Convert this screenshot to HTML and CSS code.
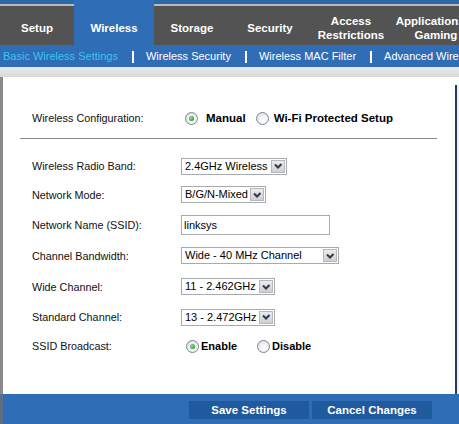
FILE: index.html
```html
<!DOCTYPE html>
<html>
<head>
<meta charset="utf-8">
<link rel="stylesheet" href="styles.css">
</head>
<body>
<div class="page">
  <nav class="tabs">
    <div class="tab t-setup">Setup</div>
    <div class="tab t-wireless active">Wireless</div>
    <div class="tab t-storage">Storage</div>
    <div class="tab t-security">Security</div>
    <div class="tab t-access">Access<br>Restrictions</div>
    <div class="tab t-apps">Applications &amp;<br>Gaming</div>
  </nav>
  <div class="subnav">
    <span class="sub current">Basic Wireless Settings</span>
    <span class="sep"></span>
    <span class="sub">Wireless Security</span>
    <span class="sep"></span>
    <span class="sub">Wireless MAC Filter</span>
    <span class="sep"></span>
    <span class="sub">Advanced Wireless Settings</span>
  </div>
  <div class="band"></div>
  <main class="main">
    <div class="content">
      <div class="config">
        <div class="label">Wireless Configuration:</div>
        <div class="choices">
          <span class="radio checked"></span><span class="opt big">Manual</span>
          <span class="radio r-wps"></span><span class="opt big o-wps">Wi-Fi Protected Setup</span>
        </div>
      </div>
      <div class="rule"></div>
      <div class="form">
        <div class="label">Wireless Radio Band:</div>
        <div class="field"><div class="select w-band"><span class="val">2.4GHz Wireless</span><span class="drop"><svg viewBox="0 0 12 12" width="12" height="12"><path d="M3 4.5 L6 7.5 L9.5 4" fill="none" stroke="#2b3a55" stroke-width="2"/></svg></span></div></div>

        <div class="label">Network Mode:</div>
        <div class="field"><div class="select w-mode"><span class="val">B/G/N-Mixed</span><span class="drop"><svg viewBox="0 0 12 12" width="12" height="12"><path d="M3 4.5 L6 7.5 L9.5 4" fill="none" stroke="#2b3a55" stroke-width="2"/></svg></span></div></div>

        <div class="label">Network Name (SSID):</div>
        <div class="field"><div class="input">linksys</div></div>

        <div class="label">Channel Bandwidth:</div>
        <div class="field"><div class="select w-bw"><span class="val">Wide - 40 MHz Channel</span><span class="drop"><svg viewBox="0 0 12 12" width="12" height="12"><path d="M3 4.5 L6 7.5 L9.5 4" fill="none" stroke="#2b3a55" stroke-width="2"/></svg></span></div></div>

        <div class="label">Wide Channel:</div>
        <div class="field"><div class="select w-ch"><span class="val">11 - 2.462GHz</span><span class="drop"><svg viewBox="0 0 12 12" width="12" height="12"><path d="M3 4.5 L6 7.5 L9.5 4" fill="none" stroke="#2b3a55" stroke-width="2"/></svg></span></div></div>

        <div class="label">Standard Channel:</div>
        <div class="field"><div class="select w-ch"><span class="val">13 - 2.472GHz</span><span class="drop"><svg viewBox="0 0 12 12" width="12" height="12"><path d="M3 4.5 L6 7.5 L9.5 4" fill="none" stroke="#2b3a55" stroke-width="2"/></svg></span></div></div>

        <div class="label">SSID Broadcast:</div>
        <div class="field choices ssid">
          <span class="radio checked"></span><span class="opt o-en">Enable</span>
          <span class="radio r-dis"></span><span class="opt o-dis">Disable</span>
        </div>
      </div>
    </div>
    <div class="rail"></div>
  </main>
  <footer class="footer">
    <button class="btn">Save Settings</button>
    <button class="btn">Cancel Changes</button>
  </footer>
</div>
</body>
</html>
```

FILE: styles.css
```css
* { box-sizing: border-box; }
html, body { margin: 0; padding: 0; background: #ffffff; }
body { font-family: "Liberation Sans", Arial, sans-serif; color: #000; }

.page {
  width: 459px;
  height: 424px;
  overflow: hidden;
  display: flex;
  flex-direction: column;
}

/* Top tabs */
.tabs {
  height: 45px;
  display: flex;
  overflow: hidden;
  flex-shrink: 0;
  background: linear-gradient(to bottom, #2d68ad 0, #2d68ad 4px, #b9b9b9 4px, #b9b9b9 6px, #535353 6px);
}
.tab {
  flex-shrink: 0;
  display: flex;
  align-items: center;
  justify-content: center;
  text-align: center;
  padding-top: 10px;
  color: #ffffff;
  font-weight: bold;
  font-size: 11.5px;
  line-height: 14px;
  white-space: nowrap;
}
.tab.active { background: #2f6db6; }
.t-setup { width: 74px; }
.t-wireless { width: 80px; }
.t-storage { width: 76px; }
.t-security { width: 80px; }
.t-access { width: 82px; }
.t-apps { width: 88px; }

/* Sub navigation */
.subnav {
  height: 22px;
  flex-shrink: 0;
  background: #2f6db6;
  display: flex;
  align-items: center;
  padding-left: 3px;
  white-space: nowrap;
  overflow: hidden;
  font-size: 11px;
}
.sub { color: #ffffff; flex-shrink: 0; }
.sub.current { color: #3cc3ef; }
.sep {
  flex-shrink: 0;
  width: 2px;
  height: 12px;
  background: #ffffff;
  margin: 1px 12px 0 14px;
}

.band {
  height: 10px;
  flex-shrink: 0;
  background: linear-gradient(to bottom, #e9e9e9, #d9d9d9);
}

/* Main area */
.main {
  flex: 1;
  display: flex;
  border-left: 3px solid #8a8a8a;
  background: #ffffff;
}
.content {
  flex: 1;
  padding: 27px 18px 0 17px;
}
.rail {
  width: 4px;
  margin-top: 8px;
  border-left: 2px solid #23395f;
  background: #f2f2f2;
}

.config {
  height: 28px;
  display: grid;
  grid-template-columns: 149px 1fr;
  align-items: center;
  padding-left: 12px;
}
.label {
  font-size: 10.8px;
  color: #111;
}
.choices {
  display: flex;
  align-items: center;
}
.radio {
  width: 13px;
  height: 13px;
  border-radius: 50%;
  border: 1px solid #7a8796;
  background: radial-gradient(circle at 60% 65%, #ffffff 0, #f1f1f1 45%, #d0d4d8 100%);
  margin-left: 4px;
  position: relative;
  flex-shrink: 0;
}
.radio.checked::after {
  content: "";
  position: absolute;
  left: 3px;
  top: 3px;
  width: 5px;
  height: 5px;
  border-radius: 50%;
  background: radial-gradient(circle at 40% 40%, #9be39b 0, #3aa83a 60%, #217d21 100%);
}
.opt {
  font-weight: bold;
  font-size: 11px;
  margin-left: 4px;
}
.opt.big { font-size: 11.5px; margin-left: 8px; }
.r-wps { margin-left: 10px; }
.opt.o-wps { margin-left: 5px; }

.rule {
  margin-top: 6px;
  height: 1px;
  background: #8a8a8a;
}

.form {
  margin-top: 13px;
  padding-left: 12px;
  display: grid;
  grid-template-columns: 149px 1fr;
  grid-template-rows: 28px 29px 31px 31px 31px 30px 28px;
  align-items: center;
}
.field { display: flex; align-items: center; }

.select {
  height: 17px;
  border: 1px solid #a7abb0;
  background: #ffffff;
  display: flex;
  align-items: stretch;
  font-size: 11px;
}
.select .val {
  flex: 1;
  padding-left: 3px;
  line-height: 15px;
  white-space: nowrap;
  overflow: hidden;
}
.drop {
  width: 14px;
  margin: 1px;
  border: 1px solid #b7b7b7;
  background: linear-gradient(to bottom, #ececec, #cfcfcf);
  display: flex;
  align-items: center;
  justify-content: center;
}
.drop svg { display: block; }
.w-band { width: 106px; }
.w-mode { width: 85px; }
.w-bw { width: 158px; }
.w-ch { width: 94px; }

.input {
  width: 149px;
  height: 20px;
  border: 1px solid #a7abb0;
  font-size: 11px;
  line-height: 18px;
  padding-left: 2px;
}

.ssid .radio { margin-left: 5px; }
.ssid .o-en { margin-left: 2px; }
.ssid .r-dis { margin-left: 20px; }
.ssid .o-dis { margin-left: 2px; }

/* Footer */
.footer {
  height: 30px;
  flex-shrink: 0;
  background: #2f6db6;
  border-left: 3px solid #5d6f88;
  display: flex;
  gap: 3px;
  padding: 7px 0 0 186px;
}
.btn {
  width: 120px;
  height: 18px;
  border: none;
  margin: 0;
  padding: 0;
  background: #1f5a9f;
  color: #ffffff;
  font-family: "Liberation Sans", Arial, sans-serif;
  font-weight: bold;
  font-size: 11.5px;
  line-height: 18px;
}
```
